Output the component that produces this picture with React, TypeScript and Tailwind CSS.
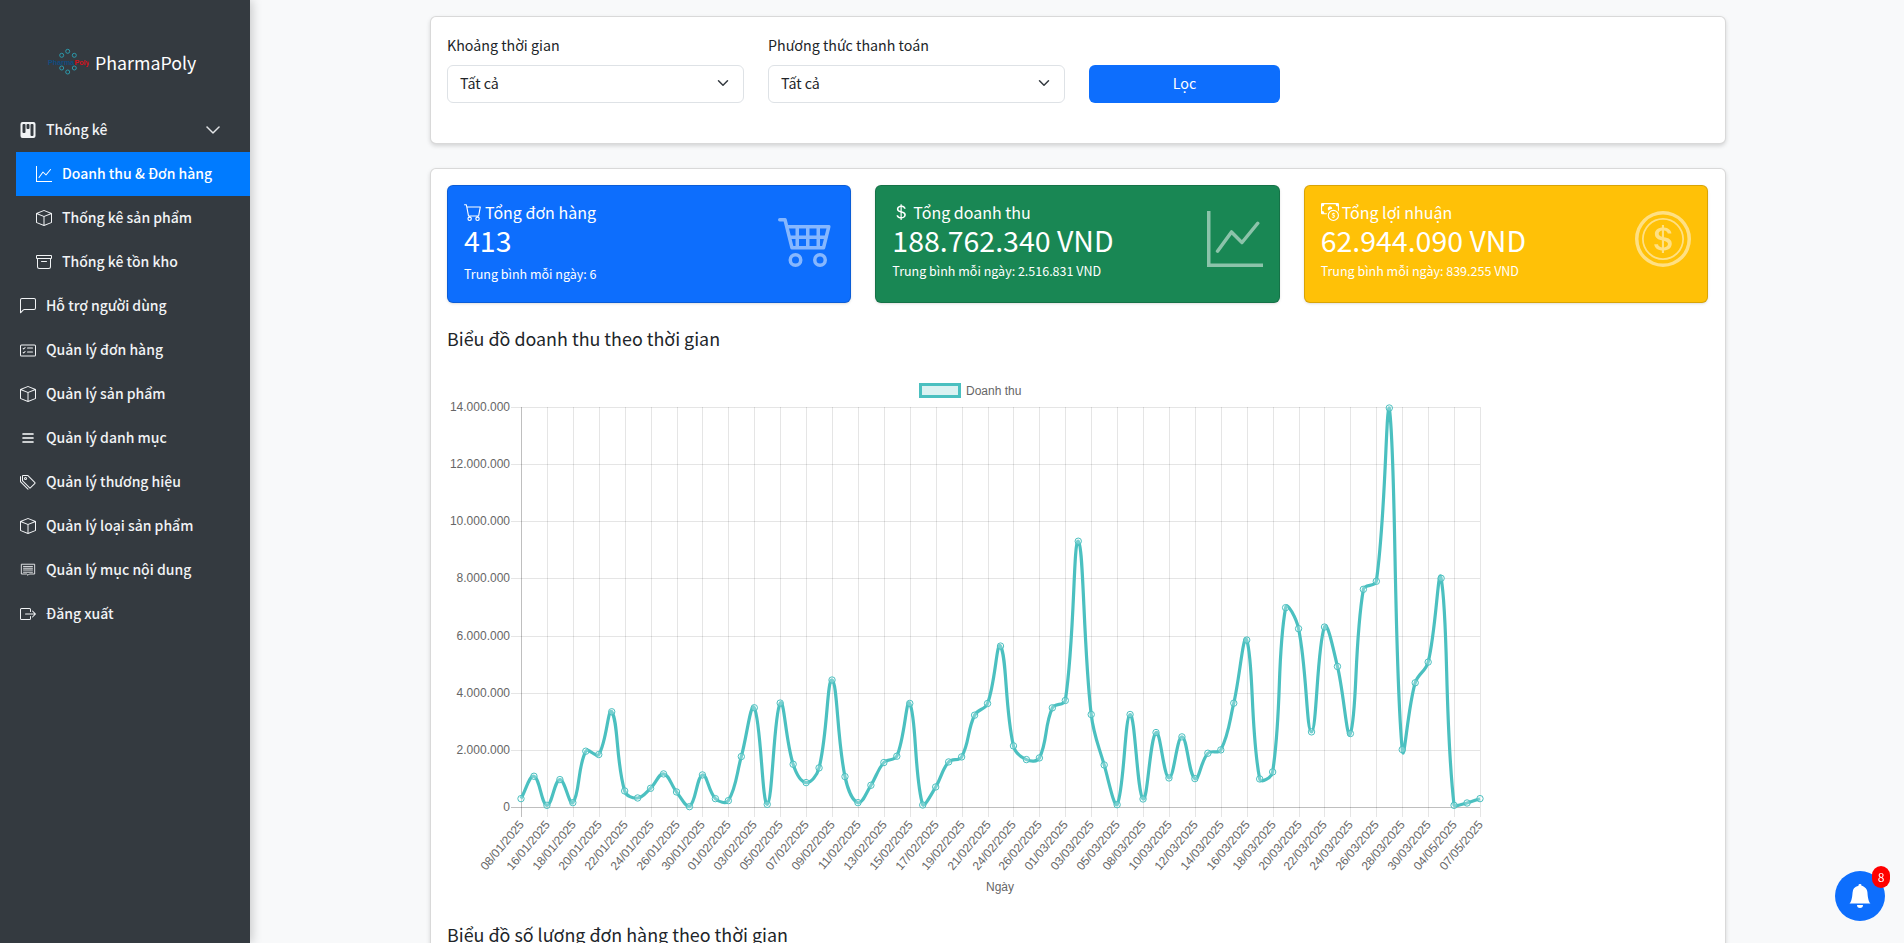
import React from 'react';
import {
  BsArchive, BsBellFill, BsBox, BsBoxArrowRight, BsCardChecklist, BsCart, BsCart4, BsCashCoin, BsChatLeft,
  BsChevronDown, BsCoin, BsCurrencyDollar, BsGraphUp, BsKanbanFill, BsList, BsTags,
} from 'react-icons/bs';

const FONT = '"Noto Sans CJK SC", "Noto Sans", sans-serif';

const ContentIcon = () => (
  <svg width="18" height="16" viewBox="0 0 18 16" fill="none" stroke="currentColor" strokeWidth="1">
    <path d="M1.5 1.5h15v11h-6l-1.5 1.5-1.5-1.5h-6z" />
    <path d="M3.5 4h11M3.5 6h11M3.5 8h11M3.5 10.500h11" />
  </svg>
);

const menu = [
  { label: 'Hỗ trợ người dùng', icon: <BsChatLeft size={16} /> },
  { label: 'Quản lý đơn hàng', icon: <BsCardChecklist size={17} /> },
  { label: 'Quản lý sản phẩm', icon: <BsBox size={16} /> },
  { label: 'Quản lý danh mục', icon: <BsList size={16} stroke="currentColor" strokeWidth={0.6} /> },
  { label: 'Quản lý thương hiệu', icon: <BsTags size={16} /> },
  { label: 'Quản lý loại sản phẩm', icon: <BsBox size={16} /> },
  { label: 'Quản lý mục nội dung', icon: <ContentIcon /> },
  { label: 'Đăng xuất', icon: <BsBoxArrowRight size={16} /> },
];

const Logo = () => (
  <svg width="42" height="30" viewBox="47 50 42 30">
    {[[67.7, 53.3], [74.3, 57.3], [61.7, 57.3], [61.7, 70], [74.3, 70], [67.7, 74]].map(([x, y]) => (
      <circle key={`${x}-${y}`} cx={x} cy={y} r="2" fill="none" stroke="#2aa3b5" strokeWidth="0.9" />
    ))}
    <text x="48" y="66.500" fontSize="7.200" fontWeight="700" fontFamily="Liberation Sans, sans-serif">
      <tspan fill="#0f4c81">Pharma</tspan>
      <tspan fill="#d3121d">Poly</tspan>
    </text>
  </svg>
);

const Sidebar = () => (
  <aside className="w-[250px] shrink-0 h-full bg-[#343a40] text-[#f1f3f5] shadow-[2px_0_10px_rgba(0,0,0,0.2)] z-10 font-medium text-sm">
    <div className="h-[108px] pt-[48px] pl-[47px] flex items-start gap-[6px]">
      <Logo />
      <span className="text-[17.8px] text-white font-normal leading-7">PharmaPoly</span>
    </div>
    <div className="h-[44px] pl-[20px] pr-[29px] flex items-center">
      <BsKanbanFill size={16} />
      <span className="ml-[10px] flex-1 pb-[2px]">Thống kê</span>
      <BsChevronDown size={16} stroke="currentColor" strokeWidth={0.5} />
    </div>
    <div className="ml-4">
      <div className="h-[44px] pl-5 flex items-center bg-[#007bff] text-white">
        <BsGraphUp size={16} />
        <span className="ml-[10px] pb-[2px]">Doanh thu &amp; Đơn hàng</span>
      </div>
      <div className="h-[44px] pl-5 flex items-center">
        <BsBox size={16} />
        <span className="ml-[10px] pb-[2px]">Thống kê sản phẩm</span>
      </div>
      <div className="h-[44px] pl-5 flex items-center">
        <BsArchive size={16} />
        <span className="ml-[10px] pb-[2px]">Thống kê tồn kho</span>
      </div>
    </div>
    {menu.map((m) => (
      <div key={m.label} className="h-[44px] pl-[20px] flex items-center">
        <span className="w-4 flex justify-center">{m.icon}</span>
        <span className="ml-[10px] pb-[2px]">{m.label}</span>
      </div>
    ))}
  </aside>
);

const SelectBox = ({ label }: { label: string }) => (
  <div className="w-[297px] text-[14.25px]">
    <div className="h-6 mb-2 leading-6 text-[#212529]">{label}</div>
    <div className="h-[38px] px-3 pb-[2px] flex items-center justify-between bg-white border border-[#dee2e6] rounded-md text-[#212529]">
      <span>Tất cả</span>
      <svg width="16" height="12" viewBox="0 0 16 16" fill="none" stroke="#343a40" strokeWidth="2" strokeLinecap="round" strokeLinejoin="round">
        <path d="m2 5 6 6 6-6" />
      </svg>
    </div>
  </div>
);

const statCards = [
  {
    title: 'Tổng đơn hàng', value: '413', note: 'Trung bình mỗi ngày: 6',
    bg: 'bg-[#0d6efd]', titleIcon: <BsCart size={18} />, big: <BsCart4 size={56} />, noteMt: 'mt-[6px]',
  },
  {
    title: 'Tổng doanh thu', value: '188.762.340 VND', note: 'Trung bình mỗi ngày: 2.516.831 VND',
    bg: 'bg-[#198754]', titleIcon: <BsCurrencyDollar size={18} />, big: <BsGraphUp size={56} />, noteMt: 'mt-[3px]',
  },
  {
    title: 'Tổng lợi nhuận', value: '62.944.090 VND', note: 'Trung bình mỗi ngày: 839.255 VND',
    bg: 'bg-[#ffc107]', titleIcon: <BsCashCoin size={18} />, big: <BsCoin size={56} />, noteMt: 'mt-[3px]',
  },
];

const StatCard = ({ card }: { card: (typeof statCards)[number] }) => (
  <div className={`${card.bg} h-[118px] rounded-md border border-black/15 shadow-sm text-white px-4 pt-[14px] flex justify-between`}>
    <div>
      <div className="flex items-center text-base leading-6">
        <span className="w-[21px] shrink-0">{card.titleIcon}</span>
        <span>{card.title}</span>
      </div>
      <div className="text-[28.500px] leading-9 mt-[-2px]">{card.value}</div>
      <div className={`text-[12.500px] leading-5 ${card.noteMt}`}>{card.note}</div>
    </div>
    <div className="mt-[11px] opacity-50">{card.big}</div>
  </div>
);

// y pixel of each of the 75 points, read off the 14M..0 axis (407..807)
const ys = [
  1283, 1216, 1303, 1226, 1295, 1141, 1151, 1023, 1260, 1281, 1252, 1209, 1263, 1307, 1212, 1283, 1289, 1157, 1011, 1300,
  997, 1180, 1235, 1191, 928, 1217, 1295, 1243, 1175, 1156, 998, 1302,
].map((v) => 807 - ((1308 - v) * 400) / 1197).concat(
  [
    1190, 1115, 1100, 975, 940, 768, 1067, 1108, 1103, 953, 931, 454, 973, 1124, 1243, 973, 1226, 1027, 1163, 1040, 1165,
    1089, 1079, 939, 750, 1166, 1145, 653, 716, 1025, 711, 829, 1030, 598, 574, 55, 1078, 878, 816, 565, 1245, 1238, 1225,
  ].map((v) => 807 - ((1250 - v) * 400) / 1198),
);

const X0 = 521;
const X1 = 1480;
const points = ys.map((y, i) => ({ x: X0 + (i * (X1 - X0)) / (ys.length - 1), y }));

// same spline as the chart library: tension 0.4, capped to the plot area
function linePath() {
  const t = 0.4;
  const ctrl = points.map((p, i) => {
    const a = points[Math.max(i - 1, 0)];
    const b = points[Math.min(i + 1, points.length - 1)];
    const d01 = Math.hypot(p.x - a.x, p.y - a.y);
    const d12 = Math.hypot(b.x - p.x, b.y - p.y);
    const sum = d01 + d12 || 1;
    const cap = (v: number) => Math.min(807, Math.max(407, v));
    return {
      px: p.x - (t * d01 * (b.x - a.x)) / sum,
      py: cap(p.y - (t * d01 * (b.y - a.y)) / sum),
      nx: p.x + (t * d12 * (b.x - a.x)) / sum,
      ny: cap(p.y + (t * d12 * (b.y - a.y)) / sum),
    };
  });
  let d = `M${points[0].x} ${points[0].y}`;
  for (let i = 1; i < points.length; i++) {
    d += `C${ctrl[i - 1].nx} ${ctrl[i - 1].ny} ${ctrl[i].px} ${ctrl[i].py} ${points[i].x} ${points[i].y}`;
  }
  return d;
}

const dates = [
  '08/01', '16/01', '18/01', '20/01', '22/01', '24/01', '26/01', '30/01', '01/02', '03/02', '05/02', '07/02', '09/02',
  '11/02', '13/02', '15/02', '17/02', '19/02', '21/02', '24/02', '26/02', '01/03', '03/03', '05/03', '08/03', '10/03',
  '12/03', '14/03', '16/03', '18/03', '20/03', '22/03', '24/03', '26/03', '28/03', '30/03', '04/05', '07/05',
];
const yTicks = ['14.000.000', '12.000.000', '10.000.000', '8.000.000', '6.000.000', '4.000.000', '2.000.000', '0'];

const RevenueChart = () => (
  <svg width="1050" height="530" viewBox="447 370 1050 530" className="block" fontFamily="Liberation Sans, sans-serif" fontSize="12" fill="#666">
    <rect x="920.500" y="384.500" width="39" height="12" fill="rgba(75,192,192,0.2)" stroke="rgb(75,192,192)" strokeWidth="3" />
    <text x="966" y="394.500">Doanh thu</text>
    {yTicks.map((label, i) => {
      const y = Math.round(407 + (i * 400) / 7) + 0.5;
      return (
        <g key={label}>
          <line x1="511" x2={X1} y1={y} y2={y} stroke={i === 7 ? 'rgba(0,0,0,0.25)' : 'rgba(0,0,0,0.1)'} />
          <text x="510" y={y + 3.500} textAnchor="end">{label}</text>
        </g>
      );
    })}
    {dates.map((date, i) => {
      const x = Math.round(X0 + (i * (X1 - X0)) / (dates.length - 1)) + 0.5;
      return (
        <g key={date}>
          <line x1={x} x2={x} y1="407" y2="817" stroke={i === 0 ? 'rgba(0,0,0,0.25)' : 'rgba(0,0,0,0.1)'} />
          <text x={x + 3} y="825" textAnchor="end" transform={`rotate(-50 ${x + 3} 825)`}>{`${date}/2025`}</text>
        </g>
      );
    })}
    <path d={linePath()} fill="none" stroke="rgb(75,192,192)" strokeWidth="3.200" />
    {points.map((p) => (
      <circle key={p.x} cx={p.x} cy={p.y} r="3.200" fill="rgba(255,255,255,0.25)" stroke="rgb(75,192,192)" />
    ))}
    <text x="1000" y="891" textAnchor="middle">Ngày</text>
  </svg>
);

export default function App() {
  return (
    <div className="h-screen flex overflow-hidden bg-[#f8f9fa]" style={{ fontFamily: FONT }}>
      <Sidebar />
      <main className="flex-1 overflow-hidden">
        <div className="w-[1296px] ml-[180px] pt-4">
          <div className="h-[128px] bg-white rounded-md border border-black/15 shadow-[0_2px_4px_rgba(0,0,0,0.15)] p-4 flex items-start gap-6">
            <SelectBox label="Khoảng thời gian" />
            <SelectBox label="Phương thức thanh toán" />
            <button className="w-[191px] h-[38px] mt-8 pb-[2px] bg-[#0d6efd] text-white rounded-md text-[14.25px]">Lọc</button>
          </div>
          <div className="mt-6 bg-white rounded-md border border-black/15 shadow-[0_2px_4px_rgba(0,0,0,0.15)] p-4 pr-[17px] h-[900px]">
            <div className="grid grid-cols-3 gap-6">
              {statCards.map((c) => (
                <StatCard key={c.title} card={c} />
              ))}
            </div>
            <h5 className="text-[17.9px] leading-6 mt-[23px] mb-5 text-[#212529]">Biểu đồ doanh thu theo thời gian</h5>
            <RevenueChart />
            <h5 className="text-[17.9px] leading-6 mt-[22px] text-[#212529]">Biểu đồ số lượng đơn hàng theo thời gian</h5>
          </div>
        </div>
      </main>
      <div className="fixed right-[19px] bottom-[22px] w-[50px] h-[50px] rounded-full bg-[#0d6efd] text-white flex items-center justify-center">
        <BsBellFill size={24} />
        <span className="absolute top-[-5px] right-[-5px] w-[18px] h-[22px] rounded-full bg-[#ff0000] text-xs flex items-center justify-center">8</span>
      </div>
    </div>
  );
}
